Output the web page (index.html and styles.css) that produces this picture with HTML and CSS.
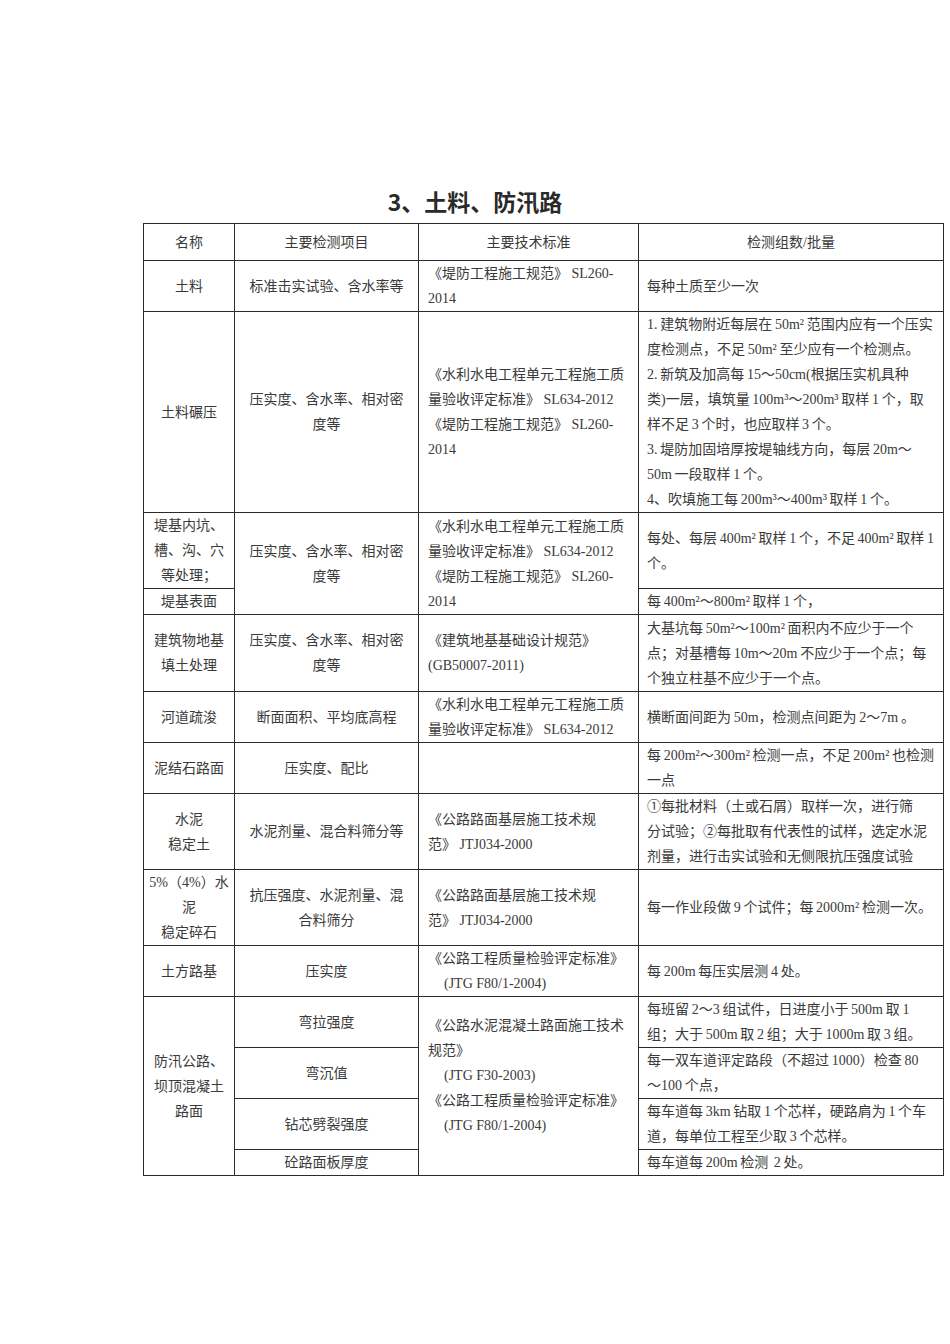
FILE: index.html
```html
<!DOCTYPE html>
<html lang="zh-CN">
<head>
<meta charset="utf-8">
<title>3、土料、防汛路</title>
<link rel="stylesheet" href="styles.css">
</head>
<body>
<div class="page">
  <h1 class="title">3、土料、防汛路</h1>
  <table class="spec">
    <colgroup>
      <col class="c1"><col class="c2"><col class="c3"><col class="c4">
    </colgroup>
    <tr class="h37">
      <td class="ctr">名称</td>
      <td class="ctr">主要检测项目</td>
      <td class="ctr">主要技术标准</td>
      <td class="ctr">检测组数/批量</td>
    </tr>
    <tr class="h51">
      <td class="ctr">土料</td>
      <td class="ctr">标准击实试验、含水率等</td>
      <td class="std">《堤防工程施工规范》 SL260-<br>2014</td>
      <td class="qty">每种土质至少一次</td>
    </tr>
    <tr class="h201">
      <td class="ctr">土料碾压</td>
      <td class="ctr">压实度、含水率、相对密<br>度等</td>
      <td class="std">《水利水电工程单元工程施工质<br>量验收评定标准》 SL634-2012<br>《堤防工程施工规范》 SL260-<br>2014</td>
      <td class="qty">1. 建筑物附近每层在 50m² 范围内应有一个压实<br>度检测点，不足 50m² 至少应有一个检测点。<br>2. 新筑及加高每 15～50cm(根据压实机具种<br>类)一层，填筑量 100m³～200m³ 取样 1 个，取<br>样不足 3 个时，也应取样 3 个。<br>3. 堤防加固培厚按堤轴线方向，每层 20m～<br>50m 一段取样 1 个。<br>4、吹填施工每 200m³～400m³ 取样 1 个。</td>
    </tr>
    <tr class="h75">
      <td class="ctr">堤基内坑、<br>槽、沟、穴<br>等处理；</td>
      <td class="ctr" rowspan="2">压实度、含水率、相对密<br>度等</td>
      <td class="std" rowspan="2">《水利水电工程单元工程施工质<br>量验收评定标准》 SL634-2012<br>《堤防工程施工规范》 SL260-<br>2014</td>
      <td class="qty">每处、每层 400m² 取样 1 个，不足 400m² 取样 1<br>个。</td>
    </tr>
    <tr class="h26">
      <td class="ctr">堤基表面</td>
      <td class="qty">每 400m²～800m² 取样 1 个，</td>
    </tr>
    <tr class="h77">
      <td class="ctr">建筑物地基<br>填土处理</td>
      <td class="ctr">压实度、含水率、相对密<br>度等</td>
      <td class="std">《建筑地基基础设计规范》<br>(GB50007-2011)</td>
      <td class="qty">大基坑每 50m²～100m² 面积内不应少于一个<br>点；对基槽每 10m～20m 不应少于一个点；每<br>个独立柱基不应少于一个点。</td>
    </tr>
    <tr class="h50">
      <td class="ctr">河道疏浚</td>
      <td class="ctr">断面面积、平均底高程</td>
      <td class="std">《水利水电工程单元工程施工质<br>量验收评定标准》 SL634-2012</td>
      <td class="qty">横断面间距为 50m，检测点间距为 2～7m 。</td>
    </tr>
    <tr class="h51">
      <td class="ctr">泥结石路面</td>
      <td class="ctr">压实度、配比</td>
      <td class="std"></td>
      <td class="qty">每 200m²～300m² 检测一点，不足 200m² 也检测<br>一点</td>
    </tr>
    <tr class="h76">
      <td class="ctr">水泥<br>稳定土</td>
      <td class="ctr">水泥剂量、混合料筛分等</td>
      <td class="std">《公路路面基层施工技术规<br>范》 JTJ034-2000</td>
      <td class="qty">①每批材料（土或石屑）取样一次，进行筛<br>分试验；②每批取有代表性的试样，选定水泥<br>剂量，进行击实试验和无侧限抗压强度试验</td>
    </tr>
    <tr class="h76">
      <td class="ctr">5%（4%）水<br>泥<br>稳定碎石</td>
      <td class="ctr">抗压强度、水泥剂量、混<br>合料筛分</td>
      <td class="std">《公路路面基层施工技术规<br>范》 JTJ034-2000</td>
      <td class="qty">每一作业段做 9 个试件；每 2000m² 检测一次。</td>
    </tr>
    <tr class="h51">
      <td class="ctr">土方路基</td>
      <td class="ctr">压实度</td>
      <td class="std">《公路工程质量检验评定标准》<br><span class="ind">(JTG F80/1-2004)</span></td>
      <td class="qty">每 200m 每压实层测 4 处。</td>
    </tr>
    <tr class="h51">
      <td class="ctr" rowspan="4">防汛公路、<br>坝顶混凝土<br>路面</td>
      <td class="ctr">弯拉强度</td>
      <td class="std lift" rowspan="4">《公路水泥混凝土路面施工技术<br>规范》<br><span class="ind">(JTG F30-2003)</span><br>《公路工程质量检验评定标准》<br><span class="ind">(JTG F80/1-2004)</span></td>
      <td class="qty">每班留 2～3 组试件，日进度小于 500m 取 1<br>组；大于 500m 取 2 组；大于 1000m 取 3 组。</td>
    </tr>
    <tr class="h51">
      <td class="ctr">弯沉值</td>
      <td class="qty">每一双车道评定路段（不超过 1000）检查 80<br>～100 个点，</td>
    </tr>
    <tr class="h51">
      <td class="ctr">钻芯劈裂强度</td>
      <td class="qty">每车道每 3km 钻取 1 个芯样，硬路肩为 1 个车<br>道，每单位工程至少取 3 个芯样。</td>
    </tr>
    <tr class="h26">
      <td class="ctr">砼路面板厚度</td>
      <td class="qty">每车道每 200m 检测&nbsp; 2 处。</td>
    </tr>
  </table>
</div>
</body>
</html>
```

FILE: styles.css
```css
html, body {
  margin: 0;
  padding: 0;
  background: #ffffff;
}

.page {
  width: 950px;
  padding-top: 186px;
  font-family: "Liberation Serif", "Noto Sans CJK SC", serif;
  color: #3a3a3a;
  text-autospace: no-autospace;
}

.title {
  margin: 0;
  height: 30px;
  line-height: 30px;
  text-align: center;
  font-family: "Noto Sans CJK SC", sans-serif;
  font-size: 23px;
  font-weight: 700;
  color: #2a2a2a;
}

.spec {
  margin: 7px 0 0 143px;
  width: 801px;
  table-layout: fixed;
  border-collapse: collapse;
  font-size: 14px;
  line-height: 25px;
}

.c1 { width: 91px; }
.c2 { width: 184px; }
.c3 { width: 220px; }
.c4 { width: 305px; }

.spec td {
  border: 1px solid #2b2b2b;
  padding: 0;
  vertical-align: middle;
  white-space: nowrap;
  overflow: hidden;
}

.spec td.ctr {
  text-align: center;
  padding: 0 2px;
}

.spec td.std {
  text-align: left;
  padding: 0 0 0 9px;
}

.spec td.qty {
  text-align: left;
  padding: 0 0 0 8px;
  word-spacing: -0.8px;
}

.spec td.lift {
  padding-bottom: 22px;
}

.ind {
  display: inline-block;
  margin-left: 16px;
}

.h26 { height: 26px; }
.h37 { height: 37px; }
.h50 { height: 50px; }
.h51 { height: 51px; }
.h75 { height: 75px; }
.h76 { height: 76px; }
.h77 { height: 77px; }
.h201 { height: 201px; }
```
